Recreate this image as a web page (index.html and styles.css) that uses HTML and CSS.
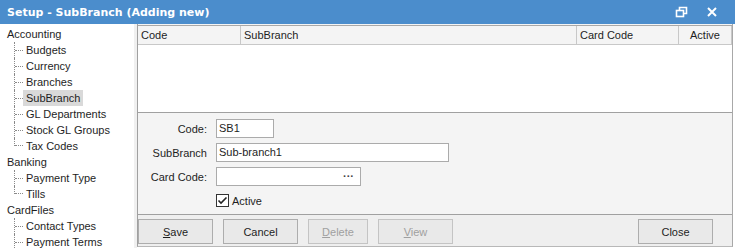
FILE: index.html
```html
<!DOCTYPE html>
<html lang="en">
<head>
    <meta charset="UTF-8">
    <title>Setup - SubBranch</title>
    <link rel="stylesheet" href="styles.css">
</head>
<body>

<div class="window">
    <!-- title bar -->
    <div class="titlebar">
        <span class="title">Setup - SubBranch (Adding new)</span>
        <div class="title-buttons">
            <svg width="14" height="12" viewBox="0 0 14 12">
                <rect x="1.5" y="4.5" width="7" height="6" fill="none" stroke="#fff" stroke-width="1.6"/>
                <path d="M4.5 4.5 V1.5 H11.5 V7.5 H8.5" fill="none" stroke="#fff" stroke-width="1.6"/>
            </svg>
            <svg width="12" height="12" viewBox="0 0 12 12">
                <path d="M2 2 L10 10 M10 2 L2 10" stroke="#fff" stroke-width="2"/>
            </svg>
        </div>
    </div>

    <div class="main">
        <!-- tree -->
        <div class="tree">
            <div class="group">Accounting</div>
            <div class="node"><span class="conn"></span><span class="txt">Budgets</span></div>
            <div class="node"><span class="conn"></span><span class="txt">Currency</span></div>
            <div class="node"><span class="conn"></span><span class="txt">Branches</span></div>
            <div class="node"><span class="conn"></span><span class="txt selected">SubBranch</span></div>
            <div class="node"><span class="conn"></span><span class="txt">GL Departments</span></div>
            <div class="node"><span class="conn"></span><span class="txt">Stock GL Groups</span></div>
            <div class="node last"><span class="conn"></span><span class="txt">Tax Codes</span></div>
            <div class="group">Banking</div>
            <div class="node"><span class="conn"></span><span class="txt">Payment Type</span></div>
            <div class="node last"><span class="conn"></span><span class="txt">Tills</span></div>
            <div class="group">CardFiles</div>
            <div class="node"><span class="conn"></span><span class="txt">Contact Types</span></div>
            <div class="node"><span class="conn"></span><span class="txt">Payment Terms</span></div>
        </div>

        <div class="splitter"></div>

        <div class="content">
            <!-- grid -->
            <div class="grid">
                <div class="grid-head">
                    <div class="col col-code">Code</div>
                    <div class="col col-sub">SubBranch</div>
                    <div class="col col-card">Card Code</div>
                    <div class="col col-active">Active</div>
                </div>
            </div>

            <!-- edit form -->
            <div class="form">
                <div class="row">
                    <label>Code:</label>
                    <div class="input w-code">SB1</div>
                </div>
                <div class="row">
                    <label>SubBranch</label>
                    <div class="input w-sub">Sub-branch1</div>
                </div>
                <div class="row">
                    <label>Card Code:</label>
                    <div class="input w-card"><span></span><span class="dots">···</span></div>
                </div>
                <div class="row check-row">
                    <label></label>
                    <div class="check">
                        <svg width="13" height="13" viewBox="0 0 13 13">
                            <rect x="0.5" y="0.5" width="12" height="12" fill="#fff" stroke="#333"/>
                            <path d="M2.5 6.5 L5 9 L10.5 3.5" fill="none" stroke="#222" stroke-width="1.6"/>
                        </svg>
                        <span>Active</span>
                    </div>
                </div>
            </div>

            <!-- buttons -->
            <div class="buttons">
                <button class="btn"><u>S</u>ave</button>
                <button class="btn">Cancel</button>
                <button class="btn disabled btn-del"><u>D</u>elete</button>
                <button class="btn disabled"><u>V</u>iew</button>
                <span class="spacer"></span>
                <button class="btn">Close</button>
            </div>
        </div>
    </div>
</div>

</body>
</html>
```

FILE: styles.css
```css
body {
    margin: 0;
    padding: 0;
    background-color: #fff;
    font-family: "Liberation Sans", Arial, sans-serif;
    font-size: 11px;
    color: #1e1e1e;
}
.window {
    width: 735px;
    height: 248px;
    overflow: hidden;
    display: flex;
    flex-direction: column;
}
.titlebar {
    height: 24px;
    background-color: #4b8dcc;
    color: #fff;
    display: flex;
    align-items: center;
    padding: 0 0 0 7px;
}
.title {
    font-family: "DejaVu Sans", Verdana, sans-serif;
    font-weight: bold;
    font-size: 11px;
    flex: 1;
}
.title-buttons {
    display: flex;
    align-items: center;
    gap: 17px;
    padding-right: 17px;
}
.main {
    flex: 1;
    display: flex;
    min-height: 0;
}
.tree {
    width: 134px;
    padding-top: 2px;
    background-color: #fff;
}
.group {
    height: 16px;
    line-height: 16px;
    padding-left: 7px;
}
.node {
    height: 16px;
    display: flex;
    align-items: stretch;
    padding-left: 14px;
}
.conn {
    width: 8px;
    border-left: 1px dotted #8a8a8a;
    display: flex;
    align-items: center;
}
.conn::after {
    content: "";
    width: 100%;
    border-top: 1px dotted #8a8a8a;
}
.node.last .conn {
    height: 8px;
    align-self: flex-start;
    align-items: flex-end;
}
.txt {
    line-height: 16px;
    padding: 0 3px;
}
.txt.selected {
    background-color: #d9d9d9;
}
.splitter {
    width: 3px;
    background-color: #f0f0f0;
}
.content {
    flex: 1;
    display: flex;
    flex-direction: column;
    border-left: 1px solid #a0a0a0;
    border-right: 1px solid #a8a8a8;
    border-bottom: 1px solid #b8b8b8;
    margin-right: 2px;
    margin-bottom: 1px;
    background-color: #f4f4f4;
}
.grid {
    height: 86px;
    margin-top: 1px;
    background-color: #fff;
    border-top: 1px solid #a8a8a8;
    border-bottom: 1px solid #a0a0a0;
}
.grid-head {
    display: flex;
    height: 18px;
    background-color: #f4f4f4;
    border-bottom: 1px solid #c8c8c8;
}
.col {
    line-height: 18px;
    padding-left: 3px;
    border-right: 1px solid #c8c8c8;
    box-sizing: border-box;
}
.col-code { width: 103px; }
.col-sub { width: 336px; }
.col-card { width: 102px; }
.col-active {
    width: 53px;
    text-align: center;
    padding-left: 0;
}
.form {
    height: 102px;
    padding-top: 6px;
    box-sizing: border-box;
    border-bottom: 1px solid #a0a0a0;
    display: flex;
    flex-direction: column;
    gap: 5px;
}
.row {
    display: flex;
    align-items: center;
    gap: 9px;
}
.row label {
    width: 69px;
    text-align: right;
}
.input {
    height: 19px;
    box-sizing: border-box;
    border: 1px solid #ababab;
    background-color: #fff;
    line-height: 17px;
    padding-left: 2px;
}
.w-code { width: 58px; }
.w-sub { width: 233px; }
.w-card {
    width: 145px;
    display: flex;
    justify-content: space-between;
    padding-right: 6px;
}
.dots {
    color: #444;
    font-weight: bold;
}
.check-row {
    margin-top: 3px;
}
.check {
    display: flex;
    align-items: center;
    gap: 3px;
}
.buttons {
    flex: 1;
    display: flex;
    align-items: flex-start;
    gap: 10px;
    padding-top: 4px;
    background-color: #efefef;
}
.btn {
    width: 75px;
    height: 25px;
    font-family: "Liberation Sans", Arial, sans-serif;
    font-size: 11px;
    color: #1e1e1e;
    background-color: #e9e9e9;
    border: 1px solid #adadad;
    border-radius: 0;
    padding: 0;
}
.btn u {
    text-decoration-thickness: 1px;
}
.btn.disabled {
    color: #a0a0a0;
    border-color: #c4c4c4;
}
.btn-del {
    width: 60px;
}
.spacer {
    flex: 1;
}
.buttons .btn:last-child {
    margin-right: 19px;
}
```
